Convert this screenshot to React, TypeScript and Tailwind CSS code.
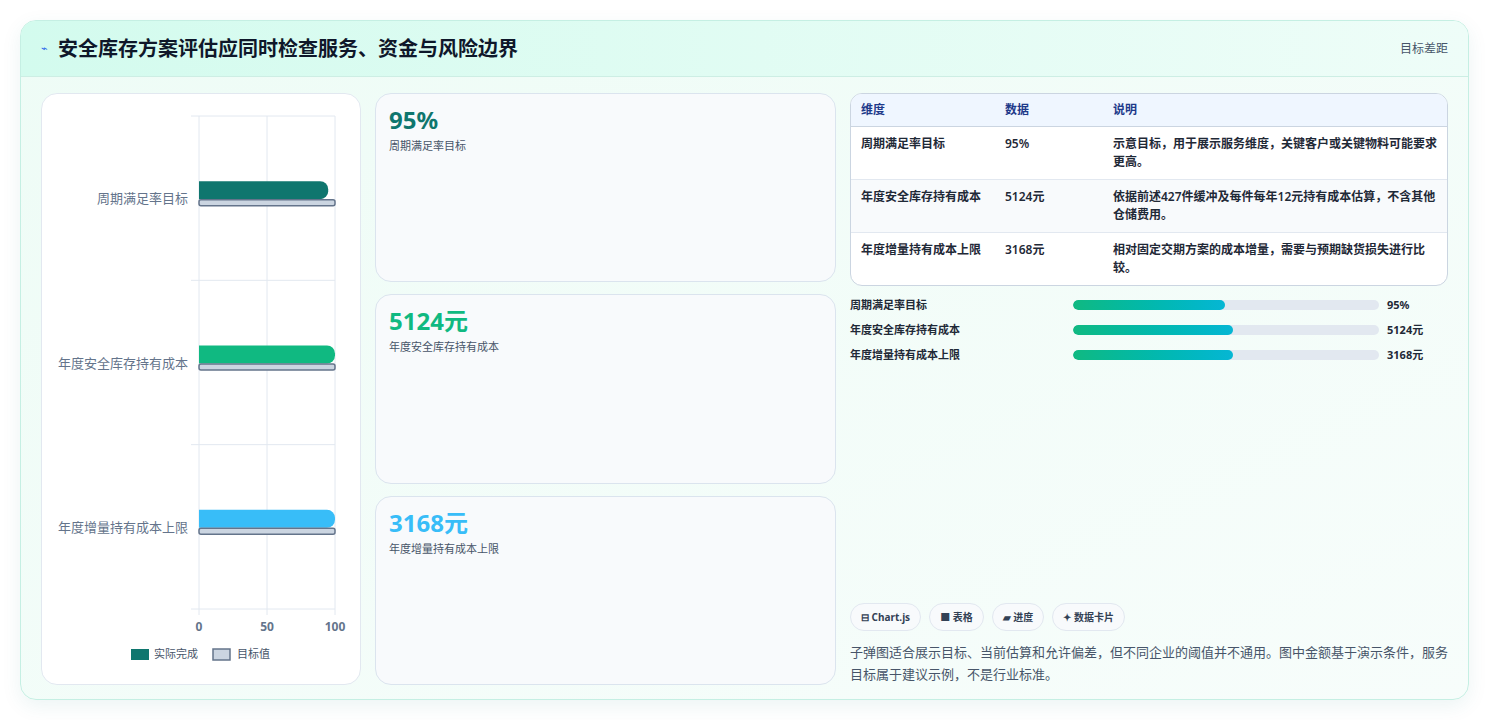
const rows = [
  { name: '周期满足率目标', value: '95%', actual: 95, color: '#0f766e', desc: '示意目标，用于展示服务维度，关键客户或关键物料可能要求更高。', pct: 49.7 },
  { name: '年度安全库存持有成本', value: '5124元', actual: 100, color: '#10b981', desc: '依据前述427件缓冲及每件每年12元持有成本估算，不含其他仓储费用。', pct: 52.3 },
  { name: '年度增量持有成本上限', value: '3168元', actual: 100, color: '#38bdf8', desc: '相对固定交期方案的成本增量，需要与预期缺货损失进行比较。', pct: 52.3 },
];

const font = { fontFamily: '"Noto Sans", "Noto Sans CJK SC", sans-serif' };

const BulletChart = () => {
  const x0 = 157;
  const x1 = 293;
  const top = 22;
  const bottom = 515;
  const band = (bottom - top) / 3;
  const sx = (v: number) => x0 + ((x1 - x0) * v) / 100;
  return (
    <svg width="320" height="590" className="block">
      {[0, 50, 100].map((v) => (
        <line key={v} x1={sx(v)} x2={sx(v)} y1={top} y2={bottom + 6} stroke="#e2e8f0" />
      ))}
      {[0, 1, 2, 3].map((i) => (
        <line key={i} x1={x0 - 8} x2={x1} y1={top + band * i} y2={top + band * i} stroke="#e2e8f0" />
      ))}
      {rows.map((r, i) => {
        const cy = top + band * i + band / 2;
        return (
          <g key={r.name}>
            <text x={146} y={cy + 5} textAnchor="end" fontSize="13" fill="#64748b">{r.name}</text>
            <path d={`M${x0} ${cy - 17} H${sx(r.actual) - 8} a8 8 0 0 1 8 8 v2 a8 8 0 0 1 -8 8 H${x0} Z`} fill={r.color} />
            <rect x={x0} y={cy + 1.5} width={x1 - x0} height={6} rx={2} fill="#cbd5e1" stroke="#64748b" strokeWidth="1.5" />
          </g>
        );
      })}
      {[0, 50, 100].map((v) => (
        <text key={v} x={sx(v)} y={537} textAnchor="middle" fontSize="12" fontWeight="bold" fill="#64748b">{v}</text>
      ))}
      <rect x={89} y={555} width={18} height={11} fill="#0f766e" />
      <text x={112} y={564} fontSize="11" fill="#475569">实际完成</text>
      <rect x={171} y={555} width={17} height={11} fill="#cbd5e1" stroke="#64748b" strokeWidth="1.5" />
      <text x={195} y={564} fontSize="11" fill="#475569">目标值</text>
    </svg>
  );
};

export default function App() {
  return (
    <div className="w-[1489px] h-[720px] bg-white p-5" style={font}>
      <div className="h-[680px] rounded-2xl border border-[#c5efe3] bg-gradient-to-br from-[#eefcf6] to-[#f7fdfb] shadow-[0_6px_20px_rgba(15,118,110,0.08)] overflow-hidden flex flex-col">
        <div className="h-14 shrink-0 flex items-center justify-between px-5 bg-gradient-to-r from-[#d3fbee] to-[#eefdf8] border-b border-[#cdeee4]">
          <div className="flex items-center gap-2.5">
            <span className="text-[11px] text-[#2563eb]">⌁</span>
            <h1 className="text-[20px] font-bold text-[#0f172a]">安全库存方案评估应同时检查服务、资金与风险边界</h1>
          </div>
          <span className="text-xs text-[#475569]">目标差距</span>
        </div>
        <div className="flex-1 flex gap-[14px] px-5 pt-4 pb-[17px]">
          <div className="w-[320px] rounded-2xl border border-[#e2e8f0] bg-white overflow-hidden">
            <BulletChart />
          </div>
          <div className="w-[461px] flex flex-col gap-3">
            {rows.map((r) => (
              <div key={r.name} className="flex-1 rounded-2xl border border-[#dbe4ee] bg-[#f8fafc] px-[13px] pt-[10px]">
                <div className="text-[24px] font-bold leading-8" style={{ color: r.color }}>{r.value}</div>
                <div className="text-[11px] text-[#475569] mt-0.5">{r.name}</div>
              </div>
            ))}
          </div>
          <div className="flex-1 flex flex-col">
            <div className="rounded-xl border border-[#cbd5e1] overflow-hidden bg-white">
              <div className="flex h-[33px] items-center bg-[#eff6ff] border-b border-[#cbd5e1] text-[12px] font-bold text-[#1e3a8a]">
                <div className="w-[154px] pl-[10px]">维度</div>
                <div className="w-[108px]">数据</div>
                <div className="flex-1">说明</div>
              </div>
              {rows.map((r, i) => (
                <div key={r.name} className={`flex py-[8px] text-[12px] font-semibold leading-[18px] text-[#1f2937] ${i < 2 ? 'border-b border-[#e2e8f0]' : ''} ${i === 1 ? 'bg-[#f8fafc]' : ''}`}>
                  <div className="w-[154px] pl-[10px]">{r.name}</div>
                  <div className="w-[108px]">{r.value}</div>
                  <div className="flex-1 pr-[10px]">{r.desc}</div>
                </div>
              ))}
            </div>
            <div className="mt-[10px] flex flex-col gap-[7px]">
              {rows.map((r) => (
                <div key={r.name} className="flex items-center h-[18px] text-[11px] font-semibold text-[#1f2937]">
                  <div className="w-[223px]">{r.name}</div>
                  <div className="w-[306px] h-2.5 rounded-full bg-[#e2e8f0] overflow-hidden">
                    <div className="h-full rounded-full bg-gradient-to-r from-[#10b981] to-[#06b6d4]" style={{ width: `${r.pct}%` }} />
                  </div>
                  <div className="ml-2 font-bold">{r.value}</div>
                </div>
              ))}
            </div>
            <div className="flex-1" />
            <div className="flex gap-2">
              {['⊟ Chart.js', '■ 表格', '▰ 进度', '✦ 数据卡片'].map((c) => (
                <span key={c} className="h-7 px-2.5 flex items-center rounded-full border border-[#e2e8f0] bg-[#f8fafc] text-[10px] font-bold text-[#334155]">{c}</span>
              ))}
            </div>
            <p className="mt-2.5 text-[13px] leading-[22px] text-[#475569]">子弹图适合展示目标、当前估算和允许偏差，但不同企业的阈值并不通用。图中金额基于演示条件，服务目标属于建议示例，不是行业标准。</p>
          </div>
        </div>
      </div>
    </div>
  );
}
